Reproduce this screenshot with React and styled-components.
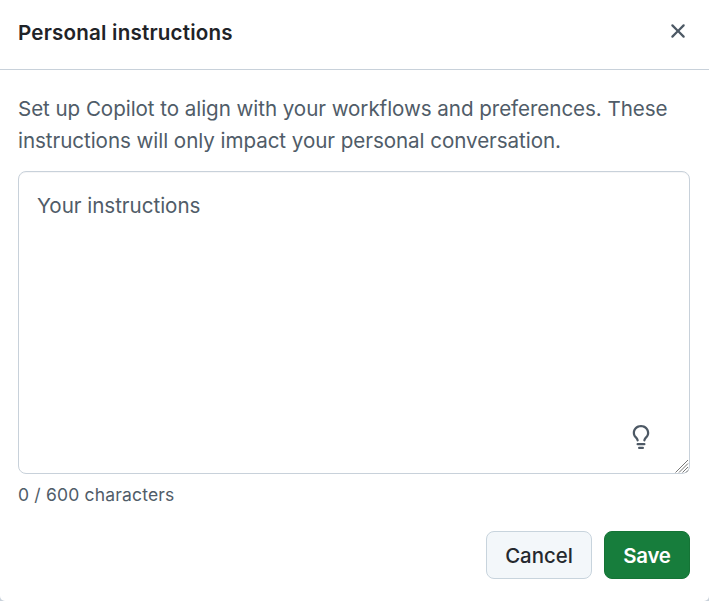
import React from "react";
import styled, { createGlobalStyle } from "styled-components";

const GlobalStyle = createGlobalStyle`
  * { box-sizing: border-box; }
  body { margin: 0; background: #c8d1da; font-family: Inter, "Liberation Sans", sans-serif; color: #1f2328; }
`;
const Dialog = styled.section`
  width: 709px; height: 601px; background: #fff; display: flex; flex-direction: column;
  overflow: hidden; border-radius: 0 0 5px 5px;
`;
const Header = styled.header`
  height: 70px; flex: none; display: flex; align-items: flex-start; justify-content: space-between;
  padding: 18px 18px 0; border-bottom: 1px solid #c8d1da;
`;
const Title = styled.h1`
  margin: 0; font-size: 20.6px; line-height: 30px; font-weight: 600; letter-spacing: 0.19px;
`;
const CloseButton = styled.button`
  border: 0; padding: 0; background: none; width: 26px; height: 26px; display: grid; place-items: center; color: #4d5965;
`;
const Body = styled.div`
  flex: 1; padding: 23px 19px 0 18px; display: flex; flex-direction: column;
`;
const Description = styled.p`
  margin: 0 0 14px; font-size: 20.6px; line-height: 32px; letter-spacing: -0.062px; color: #505c68; white-space: nowrap;
`;
const Field = styled.div`
  position: relative; height: 303px; flex: none;
`;
const Input = styled.textarea`
  display: block; width: 100%; height: 100%; resize: none; border: 1px solid #c8d1da; border-radius: 8px;
  padding: 18px 18px; font: 20.6px/32px Inter, sans-serif; letter-spacing: -0.04px; outline: 0; background: #fff;
  box-shadow: inset 0 1px 0 rgba(31,35,40,.04);
  &::placeholder { color: #505c68; opacity: 1; }
`;
const Bulb = styled.svg`
  position: absolute; right: 37px; bottom: 25px; width: 24px; height: 24px;
`;
const Grip = styled.svg`
  position: absolute; right: 1px; bottom: 1px; width: 14px; height: 14px;
`;
const Count = styled.div`
  margin-top: 8px; font-size: 17.5px; line-height: 26px; letter-spacing: 0.18px; color: #505c68;
`;
const Footer = styled.footer`
  height: 70px; flex: none; padding: 0 19px; display: flex; justify-content: flex-end; gap: 12px;
`;
const Button = styled.button`
  width: ${p => p.$primary ? "86px" : "106px"}; height: 48px; border-radius: 8px; padding: 2px 0 0;
  border: 1px solid ${p => p.$primary ? "#157436" : "#c8d4dd"};
  background: ${p => p.$primary ? "#177d3c" : "#f3f7fa"}; color: ${p => p.$primary ? "#fff" : "#25292e"};
  font: ${p => p.$primary ? 600 : 500} 20.4px/30px Inter, sans-serif;
  letter-spacing: ${p => p.$primary ? "-0.2px" : "0"};
`;

export default function App() {
  return <><GlobalStyle /><Dialog>
    <Header><Title>Personal instructions</Title><CloseButton aria-label="Close">
      <svg width="24" height="24" viewBox="0 0 16 16" fill="currentColor"><path d="M3.72 3.72a.75.75 0 0 1 1.06 0L8 6.94l3.22-3.22a.749.749 0 0 1 1.275.326.749.749 0 0 1-.215.734L9.06 8l3.22 3.22a.749.749 0 0 1-.326 1.275.749.749 0 0 1-.734-.215L8 9.06l-3.22 3.22a.751.751 0 0 1-1.042-.018.751.751 0 0 1-.018-1.042L6.94 8 3.72 4.78a.75.75 0 0 1 0-1.06Z"/></svg>
    </CloseButton></Header>
    <Body>
      <Description>Set up Copilot to align with your workflows and preferences. These<br/>instructions will only impact your personal conversation.</Description>
      <Field><Input placeholder="Your instructions" />
        <Bulb viewBox="0 0 16 16" fill="#4d5965"><path d="M8 1.5c-2.363 0-4 1.69-4 3.75 0 .984.424 1.625.984 2.304l.214.253c.223.264.47.556.673.848.284.411.537.896.621 1.49a.75.75 0 0 1-1.484.211c-.04-.282-.163-.547-.37-.847a8.456 8.456 0 0 0-.542-.68c-.084-.1-.173-.205-.268-.32C3.201 7.75 2.5 6.766 2.5 5.25 2.5 2.31 4.863 0 8 0s5.5 2.31 5.5 5.25c0 1.516-.701 2.5-1.328 3.259-.095.115-.184.22-.268.319-.207.245-.383.453-.541.681-.208.3-.33.565-.37.847a.751.751 0 0 1-1.485-.212c.084-.593.337-1.078.621-1.489.203-.292.45-.584.673-.848.075-.088.147-.173.213-.253.561-.679.985-1.32.985-2.304 0-2.06-1.637-3.75-4-3.75ZM5.75 12h4.5a.75.75 0 0 1 0 1.5h-4.5a.75.75 0 0 1 0-1.5ZM6 15.25a.75.75 0 0 1 .75-.75h2.5a.75.75 0 0 1 0 1.5h-2.5a.75.75 0 0 1-.75-.75Z"/></Bulb>
        <Grip viewBox="0 0 14 14" stroke="#777" fill="none"><path d="M.5 13.5 13 1M4 13.5 13 4.5M7.5 13.5 13 8M11 13.5l2-2"/></Grip>
      </Field>
      <Count>0 / 600 characters</Count>
    </Body>
    <Footer><Button>Cancel</Button><Button $primary>Save</Button></Footer>
  </Dialog></>;
}
